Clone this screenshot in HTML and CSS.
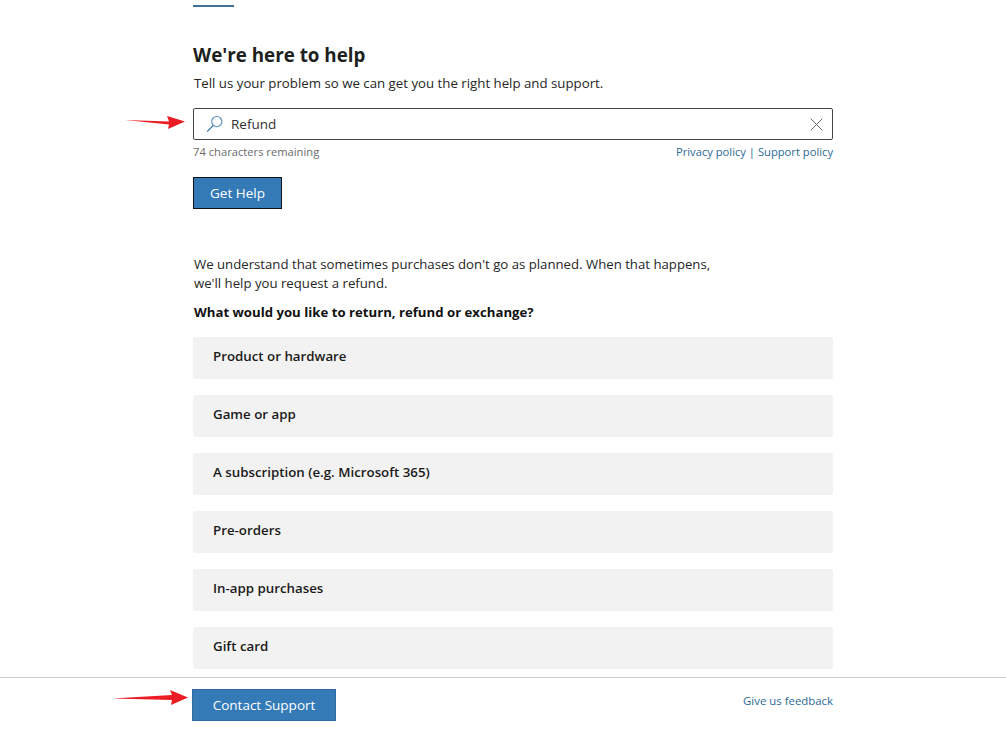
FILE: index.html
```html
<!DOCTYPE html>
<html lang="en">
<head>
    <meta charset="UTF-8">
    <meta name="viewport" content="width=device-width, initial-scale=1.0">
    <title>We're here to help</title>
    <link rel="stylesheet" href="styles.css">
</head>
<body>

<main class="content">
    <div class="top-rule"></div>

    <h1>We're here to help</h1>
    <p class="intro">Tell us your problem so we can get you the right help and support.</p>

    <div class="search-box">
        <svg class="search-icon" width="18" height="18" viewBox="0 0 18 18" fill="none">
            <circle cx="10.8" cy="6.6" r="5.1" stroke="#5a8fc0" stroke-width="1.1"/>
            <path d="M7.2 10.4 1.2 16.6" stroke="#2f6fa8" stroke-width="1.2"/>
        </svg>
        <span class="search-text">Refund</span>
        <svg class="clear-icon" width="13" height="13" viewBox="0 0 13 13" fill="none">
            <path d="M.7.7l11.6 11.6M12.3.7.7 12.3" stroke="#6b6b6b" stroke-width="1"/>
        </svg>
    </div>

    <div class="search-meta">
        <span class="remaining">74 characters remaining</span>
        <span class="policy"><a href="#">Privacy policy</a> | <a href="#">Support policy</a></span>
    </div>

    <button class="btn btn-help" type="button">Get Help</button>

    <p class="explain">We understand that sometimes purchases don't go as planned. When that happens,<br>we'll help you request a refund.</p>
    <p class="question">What would you like to return, refund or exchange?</p>

    <div class="options">
        <div class="option">Product or hardware</div>
        <div class="option">Game or app</div>
        <div class="option">A subscription (e.g. Microsoft 365)</div>
        <div class="option">Pre-orders</div>
        <div class="option">In-app purchases</div>
        <div class="option">Gift card</div>
    </div>
</main>

<footer class="footer">
    <div class="footer-inner">
        <button class="btn btn-contact" type="button">Contact Support</button>
        <a class="feedback" href="#">Give us feedback</a>
    </div>
</footer>

<!-- red annotation arrows -->
<svg class="arrow arrow-search" width="60" height="16" viewBox="0 0 60 16"><path d="M0 6 44 7.5 42 2 60 7.5 43 15 44 10.5Z" fill="#ec1c24"/></svg>
<svg class="arrow arrow-contact" width="76" height="16" viewBox="0 0 76 16"><path d="M0 8.5 60 5 58 0 76 7.5 59 15 60 10Z" fill="#ec1c24"/></svg>

</body>
</html>
```

FILE: styles.css
```css
html, body {
    margin: 0;
    height: 100%;
    overflow: hidden;
}
body {
    font-family: "Open Sans", "Noto Sans", sans-serif;
    font-size: 13.25px;
    color: #262626;
    background-color: white;
}
a {
    color: #2b6a96;
    text-decoration: none;
}
.content {
    width: 640px;
    margin-left: 193px;
    padding-top: 5px;
}
.top-rule {
    width: 41px;
    height: 2px;
    background-color: #3f7296;
}
h1 {
    margin: 35px 0 0;
    font-size: 18.8px;
    line-height: 27px;
    font-weight: 700;
    color: #201f1e;
}
.intro {
    margin: 4px 0 0;
    padding-left: 1px;
    line-height: 20px;
}
.search-box {
    display: flex;
    align-items: center;
    box-sizing: border-box;
    height: 32px;
    margin-top: 15px;
    padding: 0 9px 0 12px;
    border: 1px solid #444;
    border-radius: 2px;
}
.search-text {
    flex: 1;
    margin-left: 7px;
    font-size: 13.5px;
    color: #323130;
}
.search-meta {
    display: flex;
    justify-content: space-between;
    align-items: center;
    height: 18px;
    margin-top: 2px;
    font-size: 11.2px;
}
.remaining {
    color: #6b6b6b;
}
.policy {
    color: #2b6a96;
}
.btn {
    display: block;
    height: 32px;
    padding: 0;
    font-family: inherit;
    font-size: 13.5px;
    color: white;
    background-color: #337ab7;
    cursor: pointer;
}
.btn-help {
    width: 89px;
    margin-top: 17px;
    border: 1px solid #111;
}
.explain {
    margin: 46px 0 0;
    padding-left: 1px;
    font-size: 13.2px;
    line-height: 19px;
}
.question {
    margin: 10px 0 0;
    padding-left: 1px;
    line-height: 19px;
    font-size: 13.2px;
    font-weight: 700;
    color: #111;
}
.options {
    display: flex;
    flex-direction: column;
    gap: 16px;
    margin-top: 15px;
}
.option {
    height: 42px;
    line-height: 38px;
    padding-left: 20px;
    border-radius: 2px;
    background-color: #f2f2f2;
    font-size: 13.3px;
    font-weight: 600;
    color: #1b1a19;
}
.footer {
    position: fixed;
    left: 0;
    right: 0;
    bottom: 0;
    height: 57px;
    border-top: 1px solid #ccc;
    background-color: white;
}
.footer-inner {
    display: flex;
    justify-content: space-between;
    width: 641px;
    margin-left: 192px;
    padding-top: 11px;
}
.btn-contact {
    width: 144px;
    border: 1px solid #2f6a9e;
}
.feedback {
    margin-top: 4px;
    font-size: 11.4px;
}
.arrow {
    position: absolute;
}
.arrow-search {
    left: 125px;
    top: 114px;
}
.arrow-contact {
    left: 112px;
    top: 690px;
}
```
